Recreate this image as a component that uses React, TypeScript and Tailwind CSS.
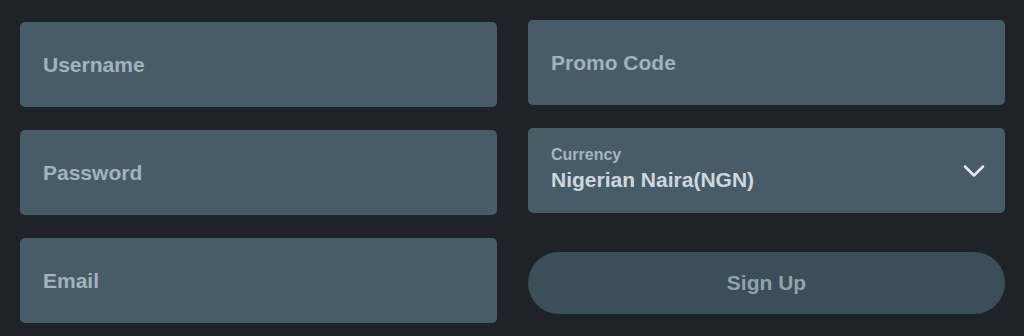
import { ChevronDown } from "lucide-react";

const fieldClass =
  "flex h-[85px] w-full items-center rounded-[5px] bg-[#485c67] px-[23px] text-[21px] font-bold text-[#a0b3be]";

const TextField = ({ label }: { label: string }) => (
  <div className={fieldClass}>
    <span>{label}</span>
  </div>
);

const App = () => {
  return (
    <div
      className="h-[336px] w-[1024px] bg-[#1d2329] pl-[20px] pr-[19px]"
      style={{ fontFamily: '"Liberation Sans", Arial, sans-serif' }}
    >
      <div className="grid grid-cols-2 gap-x-[31px]">
        <div className="flex flex-col gap-[23px] pt-[22px]">
          <TextField label="Username" />
          <TextField label="Password" />
          <TextField label="Email" />
        </div>

        <div className="flex flex-col pt-[20px]">
          <TextField label="Promo Code" />

          <div className="mt-[23px] flex h-[85px] w-full items-center justify-between rounded-[5px] bg-[#485c67] pl-[23px] pr-[13px]">
            <div className="-mt-[5px] flex flex-col">
              <span className="text-[16px] font-bold leading-[20px] text-[#a3b5c0]">Currency</span>
              <span className="mt-[3px] text-[21px] font-bold leading-[24px] text-[#cdd8de]">
                Nigerian Naira(NGN)
              </span>
            </div>
            <ChevronDown className="h-[36px] w-[36px] text-[#e3e9ec]" strokeWidth={1.7} />
          </div>

          <button className="mt-[39px] h-[62px] w-full rounded-full bg-[#3c4e58] text-[21px] font-bold text-[#8fa3ae]">
            Sign Up
          </button>
        </div>
      </div>
    </div>
  );
};

export default App;
